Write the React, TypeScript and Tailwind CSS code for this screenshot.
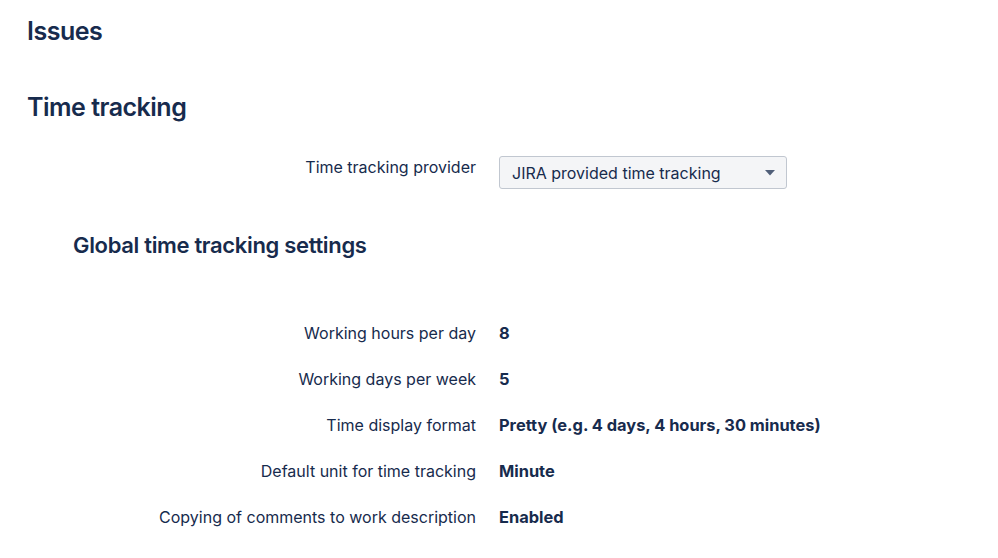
const rows = [
  { label: 'Working hours per day', value: '8' },
  { label: 'Working days per week', value: '5' },
  { label: 'Time display format', value: 'Pretty (e.g. 4 days, 4 hours, 30 minutes)' },
  { label: 'Default unit for time tracking', value: 'Minute' },
  { label: 'Copying of comments to work description', value: 'Enabled' },
]

export default function App() {
  return (
    <div className="h-[558px] w-[998px] overflow-hidden bg-white text-[#172b4d] font-['Inter',sans-serif]">
      <div className="px-[27px] pt-[15px]">
        <h1 className="text-[25px] leading-[32px] font-semibold tracking-[-0.02em]">Issues</h1>
        <h2 className="mt-[44px] text-[25px] leading-[32px] font-semibold tracking-[-0.02em]">Time tracking</h2>
      </div>

      {/* provider select */}
      <div className="mt-[33px] flex items-start">
        <div className="w-[476px] pt-[1px] text-right text-[16px] leading-[20px]">Time tracking provider</div>
        <div className="ml-[23px] flex h-[33px] w-[288px] items-center justify-between rounded-[3px] border border-[#c1c7d0] bg-[#f4f5f7] pl-[12px] pr-[11px] text-[16px]">
          <span>JIRA provided time tracking</span>
          <svg width="10" height="6" viewBox="0 0 10 6" className="fill-[#505f79]">
            <path d="M0 0h10L5 5.5z" />
          </svg>
        </div>
      </div>

      <h3 className="mt-[42px] pl-[73px] text-[22px] leading-[28px] font-semibold tracking-[-0.015em]">
        Global time tracking settings
      </h3>

      {/* settings rows */}
      <div className="mt-[64px] flex flex-col gap-[26px]">
        {rows.map((r) => (
          <div key={r.label} className="flex text-[16px] leading-[20px]">
            <div className="w-[476px] text-right">{r.label}</div>
            <div className="ml-[23px] text-[16.4px] font-bold">{r.value}</div>
          </div>
        ))}
      </div>
    </div>
  )
}
